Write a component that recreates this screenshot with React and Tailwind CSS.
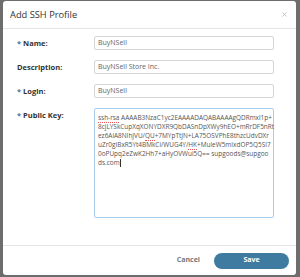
import { X } from 'lucide-react';

const squiggle = 'border-b border-dotted border-[#e55]';

function Field({ label, required, children }) {
  return (
    <div className="flex items-start">
      <div className="w-[77px] pt-[2px] text-[7.5px] font-bold text-[#333] leading-[10px]">
        {required && <span className="text-[#3f7ba0] mr-[2px]">*</span>}
        {label}
      </div>
      {children}
    </div>
  );
}

function Input({ value }) {
  return (
    <div className="w-[180px] h-[14px] border border-[#d6d6d6] rounded-[2px] px-[3px] flex items-center text-[7px] text-[#666]">
      {value}
    </div>
  );
}

export default function App() {
  return (
    <div className="w-[300px] h-[277px] bg-[#6d6d6d] pl-[3px] pt-[1px]" style={{ fontFamily: '"Open Sans", sans-serif' }}>
      <div className="w-[293px] h-[274px] bg-white rounded-[3px] flex flex-col">
        <div className="h-[28px] border-b border-[#e5e5e5] flex items-center justify-between pl-[7px] pr-[8px]">
          <span className="text-[9.3px] text-[#333]">Add SSH Profile</span>
          <X size={7} strokeWidth={3} className="text-[#bbb]" />
        </div>
        <div className="flex-1 pl-[14px] pt-[7px] flex flex-col gap-[10px]">
          <Field label="Name:" required><Input value="BuyNSell" /></Field>
          <Field label="Description:"><Input value="BuyNSell Store Inc." /></Field>
          <Field label="Login:" required><Input value="BuyNSell" /></Field>
          <Field label="Public Key:" required>
            <div className="w-[180px] h-[110px] border border-[#a9cdef] rounded-[2px] px-[3px] pt-[4px] text-[6.45px] leading-[9px] text-[#555] whitespace-nowrap">
              <div><span className={squiggle}>ssh-rsa</span> AAAAB3NzaC1yc2EAAAADAQABAAAAgQDRmxl1p+</div>
              <div>8cjLYSkCupXqXONYDXR9QbDASnDpXWy9hEO+mRrDF5nRt</div>
              <div>ez6AlA8NIhJVU/<span className={squiggle}>QU</span>+7MYpTtJN+LA75OSVPhE8thzcUdvDXr</div>
              <div>uZr0gIBxR5Yt4BMkCi/WUG4Y/<span className={squiggle}>HK</span>+MuleW5mIxdOP5Q5SI7</div>
              <div>0oPUpq2eZwK2Hh7+aHyOVWui5Q== supgoods@supgoo</div>
              <div>ds.com<span className="inline-block w-[0.5px] h-[8px] bg-[#333] align-middle" /></div>
            </div>
          </Field>
        </div>
        <div className="h-[30px] border-t border-[#e5e5e5] flex items-center justify-end gap-[14px] pr-[7px]">
          <span className="text-[7px] font-bold text-[#777]">Cancel</span>
          <button className="w-[75px] h-[16px] rounded-full bg-[#3f7ba0] text-white text-[7px] font-bold">Save</button>
        </div>
      </div>
    </div>
  );
}
